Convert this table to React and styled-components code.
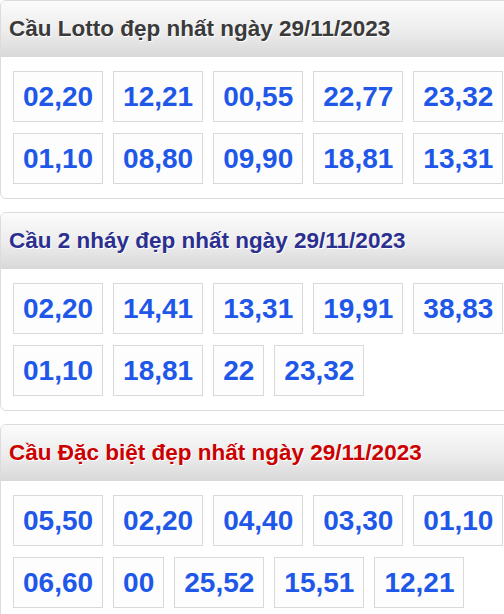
import React from 'react';
import styled, { createGlobalStyle } from 'styled-components';

const GlobalStyle = createGlobalStyle`
  html, body {
    margin: 0;
    padding: 0;
    overflow: hidden;
    background: #fff;
    font-family: "Liberation Sans", Arial, sans-serif;
  }
`;

const Page = styled.div`
  width: 540px;
  display: flex;
  flex-direction: column;
  gap: 13px;
`;

const Card = styled.section`
  border: 1px solid #dcdcdc;
  border-radius: 6px;
  overflow: hidden;
  background: #fff;
`;

const Header = styled.h2`
  margin: 0;
  height: 56px;
  display: flex;
  align-items: center;
  padding-left: 8px;
  font-size: 22.5px;
  font-weight: bold;
  color: ${props => props.tone};
  text-shadow: 1px 1px 0 #fff;
  background: linear-gradient(to bottom, #fbfbfb 0%, #ececec 55%, #d8d8d8 100%);
`;

const Numbers = styled.div`
  display: flex;
  flex-wrap: wrap;
  gap: 11px 10px;
  padding: 14px 12px;
`;

const NumberBox = styled.span`
  display: inline-block;
  padding: 9px;
  line-height: 31px;
  font-size: 28px;
  font-weight: bold;
  color: #1f58e9;
  background: #fdfdfd;
  border: 1px solid #d9d9d9;
`;

const sections = [
  {
    title: 'Cầu Lotto đẹp nhất ngày 29/11/2023',
    tone: '#3a3a3a',
    numbers: ['02,20', '12,21', '00,55', '22,77', '23,32', '01,10', '08,80', '09,90', '18,81', '13,31'],
  },
  {
    title: 'Cầu 2 nháy đẹp nhất ngày 29/11/2023',
    tone: '#2b2f8f',
    numbers: ['02,20', '14,41', '13,31', '19,91', '38,83', '01,10', '18,81', '22', '23,32'],
  },
  {
    title: 'Cầu Đặc biệt đẹp nhất ngày 29/11/2023',
    tone: '#cc0000',
    numbers: ['05,50', '02,20', '04,40', '03,30', '01,10', '06,60', '00', '25,52', '15,51', '12,21'],
  },
];

const App = () => (
  <>
    <GlobalStyle />
    <Page>
      {sections.map(s => (
        <Card key={s.title}>
          <Header tone={s.tone}>{s.title}</Header>
          <Numbers>
            {s.numbers.map((n, i) => (
              <NumberBox key={i}>{n}</NumberBox>
            ))}
          </Numbers>
        </Card>
      ))}
    </Page>
  </>
);

export default App;
